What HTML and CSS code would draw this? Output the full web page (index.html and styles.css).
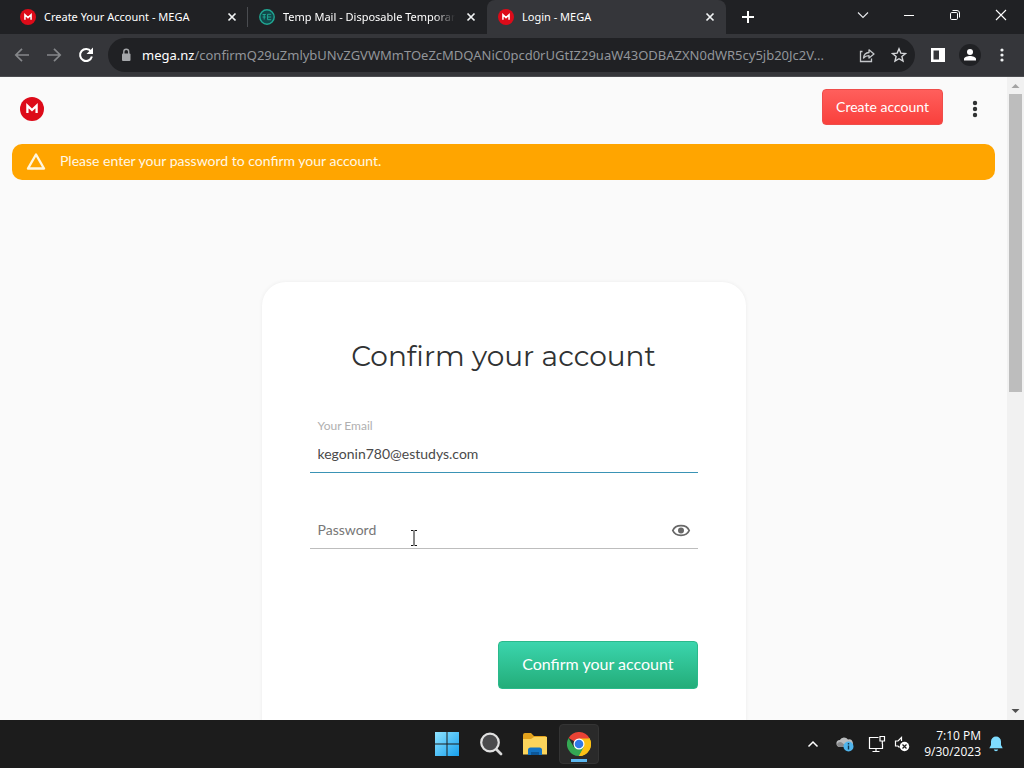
FILE: index.html
```html
<!DOCTYPE html>
<html lang="en">
<head>
<meta charset="utf-8">
<title>Login - MEGA</title>
<link rel="stylesheet" href="styles.css">
</head>
<body>
<svg class="defs" aria-hidden="true">
  <symbol id="mega" viewBox="0 0 24 24">
    <circle cx="12" cy="12" r="12" fill="#dd0b19"/>
    <path d="M7.4 16V8.6L12 13l4.6-4.4V16" fill="none" stroke="#fff" stroke-width="2.3"/>
  </symbol>
  <symbol id="cross" viewBox="0 0 16 16">
    <path d="M4.5 4.5l7 7M11.5 4.5l-7 7" stroke="#f1f3f4" stroke-width="1.7"/>
  </symbol>
</svg>

<header class="browser">
  <div class="tabstrip">
    <nav class="tabs" aria-label="Tabs">
      <div class="tab divided">
        <svg class="icon16"><use href="#mega"/></svg>
        <span class="tab-title">Create Your Account - MEGA</span>
        <button class="tab-close" aria-label="Close tab"><svg class="icon16"><use href="#cross"/></svg></button>
      </div>
      <div class="tab">
        <svg class="icon16" viewBox="0 0 16 16"><circle cx="8" cy="8" r="7.2" fill="#12484a" stroke="#20a793" stroke-width="1.4"/><path d="M3.6 5.5h3.2M5.2 5.5v5M3.6 8h3M8.6 5.3h3.6M8.6 8h3.6M8.6 10.7h3.6M8.6 5.3v5.4" stroke="#20a793" fill="none"/></svg>
        <span class="tab-title faded">Temp Mail - Disposable Temporary</span>
        <button class="tab-close" aria-label="Close tab"><svg class="icon16"><use href="#cross"/></svg></button>
      </div>
      <div class="tab active">
        <svg class="icon16"><use href="#mega"/></svg>
        <span class="tab-title">Login - MEGA</span>
        <button class="tab-close" aria-label="Close tab"><svg class="icon16"><use href="#cross"/></svg></button>
      </div>
    </nav>
    <button class="new-tab" aria-label="New tab"><svg class="icon16" viewBox="0 0 16 16"><path d="M8 2v12M2 8h12" stroke="#fff" stroke-width="2"/></svg></button>
    <div class="window-buttons">
      <button aria-label="Search tabs"><svg class="icon16" viewBox="0 0 16 16"><path d="M3 5.500l5 5 5-5" fill="none" stroke="#e8eaed" stroke-width="1.100"/></svg></button>
      <button aria-label="Minimize"><svg class="icon16" viewBox="0 0 16 16"><path d="M3 8.500h10" stroke="#fff"/></svg></button>
      <button aria-label="Restore"><svg class="icon16" viewBox="0 0 16 16"><rect x="3.500" y="5.500" width="7" height="7" rx="1.200" fill="none" stroke="#fff"/><path d="M5.500 3.500h4.500a2.500 2.500 0 0 1 2.500 2.500v4.500" fill="none" stroke="#fff"/></svg></button>
      <button aria-label="Close"><svg class="icon16" viewBox="0 0 16 16"><path d="M3 3l10 10M13 3L3 13" stroke="#fff" stroke-width="1.100"/></svg></button>
    </div>
  </div>
  <div class="toolbar">
    <button class="tool" aria-label="Back"><svg class="icon20" viewBox="0 0 20 20"><path d="M17 10H4M10 3.800L3.800 10l6.200 6.200" fill="none" stroke="#85878a" stroke-width="1.700"/></svg></button>
    <button class="tool" aria-label="Forward"><svg class="icon20" viewBox="0 0 20 20"><path d="M3 10h13M10 3.800l6.200 6.200-6.200 6.200" fill="none" stroke="#85878a" stroke-width="1.700"/></svg></button>
    <button class="tool" aria-label="Reload"><svg class="icon20" viewBox="0 0 20 20"><path d="M15 6.500A6 6 0 1 0 15.900 11.500" fill="none" stroke="#fff" stroke-width="2"/><path d="M17 2.500v6.500h-6.500z" fill="#fff"/></svg></button>
    <div class="address">
      <svg class="icon16" viewBox="0 0 16 16"><rect x="4" y="6.500" width="8.500" height="7.500" rx="1" fill="#a5a7aa"/><path d="M5.800 7V4.700a2.450 2.450 0 0 1 4.900 0V7" fill="none" stroke="#a5a7aa" stroke-width="1.400"/></svg>
      <a class="url" href="#"><span class="host">mega.nz</span>/confirmQ29uZmlybUNvZGVWMmTOeZcMDQANiC0pcd0rUGtIZ29uaW43ODBAZXN0dWR5cy5jb20Jc2V...</a>
      <button class="tool small" aria-label="Share"><svg class="icon16" viewBox="0 0 16 16"><path d="M3.500 4.500H1.500v10h11v-3" fill="none" stroke="#c4c7ca" stroke-width="1.300"/><path d="M4.500 11c.4-3.500 2-5.300 5.500-5.500V2.800L15 7l-5 4V8.600c-2.500 0-4.200.7-5.500 2.400z" fill="none" stroke="#c4c7ca" stroke-width="1.300" stroke-linejoin="round"/></svg></button>
      <button class="tool small" aria-label="Bookmark"><svg class="icon16" viewBox="0 0 16 16"><path d="M8 1.800l1.800 4.300 4.700.4-3.600 3 1.100 4.600L8 11.700l-4 2.400 1.100-4.600-3.600-3 4.700-.4z" fill="none" stroke="#d5d7da" stroke-width="1.400"/></svg></button>
    </div>
    <button class="tool" aria-label="Side panel"><svg class="icon16" viewBox="0 0 16 16"><path d="M1 1h14v14H1zM3.500 3.500v9H9v-9z" fill="#fff" fill-rule="evenodd"/></svg></button>
    <button class="tool avatar" aria-label="Profile"><svg class="icon16" viewBox="0 0 16 16"><circle cx="8" cy="5" r="3" fill="#fff"/><path d="M2 13.500v-1.500c0-2 3.500-3 6-3s6 1 6 3v1.500z" fill="#fff"/></svg></button>
    <button class="tool" aria-label="Menu"><svg class="icon16" viewBox="0 0 16 16" fill="#f1f3f4"><circle cx="8" cy="3" r="1.600"/><circle cx="8" cy="8" r="1.600"/><circle cx="8" cy="13" r="1.600"/></svg></button>
  </div>
</header>

<div class="viewport">
  <main class="page">
    <div class="topbar">
      <a class="logo" href="#" aria-label="MEGA"><svg class="icon24"><use href="#mega"/></svg></a>
      <div class="topbar-actions">
        <button class="create">Create account</button>
        <button class="more" aria-label="More"><svg class="icon24" viewBox="0 0 24 24" fill="#303233"><circle cx="12" cy="6" r="2.200"/><circle cx="12" cy="12" r="2.200"/><circle cx="12" cy="18" r="2.200"/></svg></button>
      </div>
    </div>
    <div class="notice" role="alert">
      <svg class="icon24" viewBox="0 0 24 24"><path d="M12 4.500L20 18.500H4z" fill="none" stroke="#fff6df" stroke-width="2.400" stroke-linejoin="round"/></svg>
      <span class="notice-text">Please enter your password to confirm your account.</span>
    </div>
    <form class="card">
      <h1>Confirm your account</h1>
      <div class="field focused">
        <label for="email">Your Email</label>
        <input id="email" type="text" value="kegonin780@estudys.com">
      </div>
      <div class="field password">
        <input id="password" type="password" placeholder="Password" aria-label="Password">
        <button type="button" class="reveal" aria-label="Show password"><svg class="icon20" viewBox="0 0 20 20"><path d="M1.800 10.500C4.500 4.100 15.500 4.100 18.200 10.500 15.500 16.900 4.500 16.900 1.800 10.500z" fill="none" stroke="#686868" stroke-width="1.800"/><circle cx="10" cy="10.500" r="3" fill="#686868"/></svg></button>
        <svg class="pointer" viewBox="0 0 8 16"><path d="M1 .5h2.500M4.500 .5H7M1 15.500h2.500M4.500 15.500H7M4 1v14" stroke="#111" fill="none"/></svg>
      </div>
      <button type="button" class="submit">Confirm your account</button>
    </form>
  </main>
  <div class="scrollbar" aria-hidden="true">
    <svg class="arrow" viewBox="0 0 17 17"><path d="M4.500 11h8l-4-4z" fill="#a3a3a3"/></svg>
    <div class="track"><div class="thumb"></div></div>
    <svg class="arrow" viewBox="0 0 17 17"><path d="M4.500 6h8l-4 4z" fill="#505050"/></svg>
  </div>
</div>

<footer class="taskbar">
  <div class="apps">
    <button class="app" aria-label="Start"><svg class="icon24" viewBox="0 0 24 24"><defs><linearGradient id="win" x1="0" y1="0" x2="1" y2="1"><stop offset="0" stop-color="#8fe3ff"/><stop offset="1" stop-color="#16a0ee"/></linearGradient></defs><path d="M0 0h11.500v11.500H0zM12.500 0H24v11.500H12.500zM0 12.500h11.500V24H0zM12.500 12.500H24V24H12.500z" fill="url(#win)"/></svg></button>
    <button class="app" aria-label="Search"><svg class="icon24" viewBox="0 0 24 24"><path d="M16.500 16.500l5.500 5.500" stroke="#d8d8d8" stroke-width="2.800" stroke-linecap="round"/><circle cx="11" cy="10.500" r="8.800" fill="#4b4b4d" stroke="#e0e0e0" stroke-width="2.200"/></svg></button>
    <button class="app" aria-label="File Explorer"><svg class="icon24" viewBox="0 0 24 24"><path d="M0 3a2 2 0 0 1 2-2h6l3 3h11a2 2 0 0 1 2 2v4H0z" fill="#e3a21c"/><path d="M0 7h8l3-2h13v17.500H0z" fill="#fbd45b"/><path d="M5 23v-5a2.500 2.500 0 0 1 2.500-2.500h9A2.500 2.500 0 0 1 19 18v5z" fill="#1374c4"/><path d="M8 23v-3h8v3z" fill="#0d5798"/></svg></button>
    <button class="app current" aria-label="Chrome"><svg class="icon24" viewBox="0 0 24 24"><path d="M12 12L1.600 6A12 12 0 0 1 22.400 6z" fill="#ea4335"/><path d="M12 12L22.400 6A12 12 0 0 1 12 24z" fill="#fbc116"/><path d="M1.600 6A12 12 0 0 0 12 24l5.200-9L12 12 6.800 15z" fill="#34a853"/><path d="M12 6.500h10.600A12 12 0 0 1 12 24l4.800-9z" fill="#fbc116"/><circle cx="12" cy="12" r="5.500" fill="#fff"/><circle cx="12" cy="12" r="4.300" fill="#2f78e8"/></svg></button>
  </div>
  <div class="tray">
    <button class="tray-icon chevron" aria-label="Hidden icons"><svg class="icon16" viewBox="0 0 16 16"><path d="M3.500 10.500L8 6l4.500 4.500" fill="none" stroke="#fff" stroke-width="1.500"/></svg></button>
    <button class="tray-icon cloud" aria-label="Cloud storage"><svg class="icon18" viewBox="0 0 18 18"><path d="M4 12a3.500 3.500 0 0 1-.2-7A5 5 0 0 1 12 4.500 3.800 3.800 0 0 1 14 12z" fill="#b9bbbd"/><path d="M1 9c2-3 5-3 9 3H4.500A3.200 3.200 0 0 1 1 9z" fill="#88898b"/><circle cx="12.500" cy="11.500" r="5" fill="#50b5ec"/><path d="M12.500 10.500v4M12.500 8v1.400" stroke="#123a52" stroke-width="1.400"/></svg></button>
    <button class="tray-icon network" aria-label="Network"><svg class="icon18" viewBox="0 0 18 18"><path d="M10.500 2.500h-9v11h13V9M8 13.500v3M4.500 16.500h7" fill="none" stroke="#fff" stroke-width="1.200"/><path d="M12 1.500h4.500V6H12zM14.300 6v3" fill="none" stroke="#fff" stroke-width="1.200"/></svg></button>
    <button class="tray-icon sound" aria-label="Sound muted"><svg class="icon18" viewBox="0 0 18 18"><path d="M8.500 6V2.500L5 6H2.500v5H5l1.500 1.500" fill="none" stroke="#fff" stroke-width="1.200"/><circle cx="11.500" cy="11.500" r="4.700" fill="#fff"/><path d="M9.500 9.500l4 4M13.500 9.500l-4 4" stroke="#1c1c1c" stroke-width="1.200"/></svg></button>
    <div class="clock"><span>7:10 PM</span><span>9/30/2023</span></div>
    <button class="tray-icon" aria-label="Notifications"><svg class="icon16" viewBox="0 0 16 16"><path d="M8 .5A5 5 0 0 0 3 5.500V9l-1.700 3.300h13.400L13 9V5.500A5 5 0 0 0 8 .5zM5.800 13.500a2.300 2.300 0 0 0 4.400 0z" fill="#7fdcff"/></svg></button>
  </div>
</footer>
</body>
</html>
```
FILE: styles.css
```css
* { box-sizing: border-box; }
html, body { height: 100%; }
body {
  margin: 0;
  display: flex;
  flex-direction: column;
  overflow: hidden;
  font-family: Lato, "Liberation Sans", sans-serif;
  background: #fafafa;
}
button { margin: 0; padding: 0; border: 0; background: none; font: inherit; color: inherit; }
svg { display: block; flex: none; }
.defs { position: absolute; width: 0; height: 0; }
.icon16 { width: 16px; height: 16px; }
.icon18 { width: 18px; height: 18px; }
.icon20 { width: 20px; height: 20px; }
.icon24 { width: 24px; height: 24px; }

/* Browser chrome */
.browser { flex: none; font-family: "Noto Sans", "Open Sans", sans-serif; color: #fff; background: #202124; }
.tabstrip { display: flex; height: 34px; }
.tabs { display: flex; flex: 0 1 726px; min-width: 0; padding-left: 9px; }
.tab { flex: 1; min-width: 0; display: flex; align-items: center; gap: 8px; padding: 0 8px 0 11px; }
.tab.divided { background: linear-gradient(#4a4c50, #4a4c50) right center / 1px 20px no-repeat; }
.tab.active { background: #35363a; border-radius: 8px 8px 0 0; }
.tab-title { flex: 1; min-width: 0; overflow: hidden; white-space: nowrap; font-size: 11px; line-height: 16px; }
.tab-title.faded { mask-image: linear-gradient(to right, #000 88%, transparent); }
.new-tab { width: 44px; display: flex; align-items: center; justify-content: center; }
.window-buttons { display: flex; margin-left: auto; }
.window-buttons button { width: 46px; height: 30px; display: flex; align-items: center; justify-content: center; }

.toolbar { display: flex; align-items: center; height: 43px; padding: 0 6px; background: #35363a; border-bottom: 1px solid #4b4c50; }
.tool { width: 32px; height: 32px; display: flex; align-items: center; justify-content: center; flex: none; }
.address { flex: 1; min-width: 0; height: 34px; margin: 0 7px 0 6px; padding: 0 0 0 10px; border-radius: 17px; background: #202124; display: flex; align-items: center; }
.url { flex: 1; min-width: 0; overflow: hidden; white-space: nowrap; margin-left: 8px; color: #92959a; font-size: 13px; line-height: 20px; text-decoration: none; }
.host { color: #fff; }
.avatar { border-radius: 50%; width: 22px; height: 22px; margin: 0 5px; background: #202124; }

/* Page */
.viewport { flex: 1; min-height: 0; display: flex; overflow: hidden; }
.page { flex: 1; min-width: 0; overflow: hidden; padding: 0 12px; background: #fafafa; }
.topbar { display: flex; align-items: center; justify-content: space-between; height: 64px; padding: 0 8px; }
.topbar-actions { display: flex; align-items: center; gap: 20px; }
.create { height: 36px; margin-bottom: 4px; padding: 0 13px 2px; border-radius: 4px; color: #fff; font-size: 14px; background: linear-gradient(#ff5f5c, #f9403c); border: 1px solid #ef4d4a; }
.notice { display: flex; align-items: center; gap: 12px; margin-top: 3px; height: 36px; padding: 0 12px; border-radius: 10px; background: #ffa500; color: #fff8e6; font-size: 14px; }
.notice-text { padding-bottom: 4px; }

.card { width: 484px; max-width: 100%; min-height: 600px; margin: 102px auto 0; padding: 56px 48px; border-radius: 24px; background: #fff; box-shadow: 0 0 4px rgba(0, 0, 0, 0.06); }
.card h1 { margin: 0; text-align: center; color: #303233; font-family: Montserrat, Inter, sans-serif; font-weight: 400; font-size: 28px; line-height: 36px; }
.field { position: relative; display: flex; flex-direction: column; border-bottom: 1px solid #bdbdbd; }
.field.focused { margin-top: 42px; border-bottom-color: #3a93b5; }
.field label { padding: 0 8px; color: #b0b0b0; font-size: 12px; line-height: 20px; }
.field input { width: 100%; height: 36px; padding: 0 8px 2px; border: 0; outline: 0; background: transparent; color: #4a4a4a; font-family: inherit; font-size: 14px; }
.field input::placeholder { color: #777; opacity: 1; }
.field.password { margin-top: 39px; flex-direction: row; align-items: center; }
.reveal { padding: 0 7px; }
.pointer { position: absolute; left: 100px; bottom: 2px; width: 8px; height: 16px; }
.submit { display: block; margin: 92px 0 0 auto; height: 48px; padding: 0 23px 4px; border: 1px solid #2bb98b; border-radius: 4px; color: #fff; font-size: 16px; background: linear-gradient(#3bd5ad, #23ad79); }

.scrollbar { flex: none; width: 17px; display: flex; flex-direction: column; background: #f1f1f1; }
.arrow { width: 17px; height: 17px; }
.track { flex: 1; padding: 0 2px; }
.thumb { height: 49%; background: #bdbdbd; }

/* Taskbar */
.taskbar { flex: none; display: grid; grid-template-columns: 1fr auto 1fr; height: 48px; background: #1c1c1c; color: #fff; }
.apps { grid-column: 2; display: flex; align-items: center; gap: 4px; padding-left: 2px; }
.app { width: 40px; height: 40px; border-radius: 4px; display: flex; align-items: center; justify-content: center; }
.app.current { background: linear-gradient(#5cb8f0, #5cb8f0) center bottom 1px / 16px 3px no-repeat #2a2a2a; border: 1px solid #343434; }
.tray { display: flex; align-items: center; justify-content: flex-end; padding-right: 20px; }
.tray-icon { flex: none; }
.chevron { margin-right: 15px; }
.cloud { margin-right: 14px; }
.network { margin-right: 7px; }
.clock { display: flex; flex-direction: column; align-items: flex-end; margin: 0 7px 0 13px; font-family: "Open Sans", "Noto Sans", sans-serif; font-size: 12px; line-height: 16px; }
```
